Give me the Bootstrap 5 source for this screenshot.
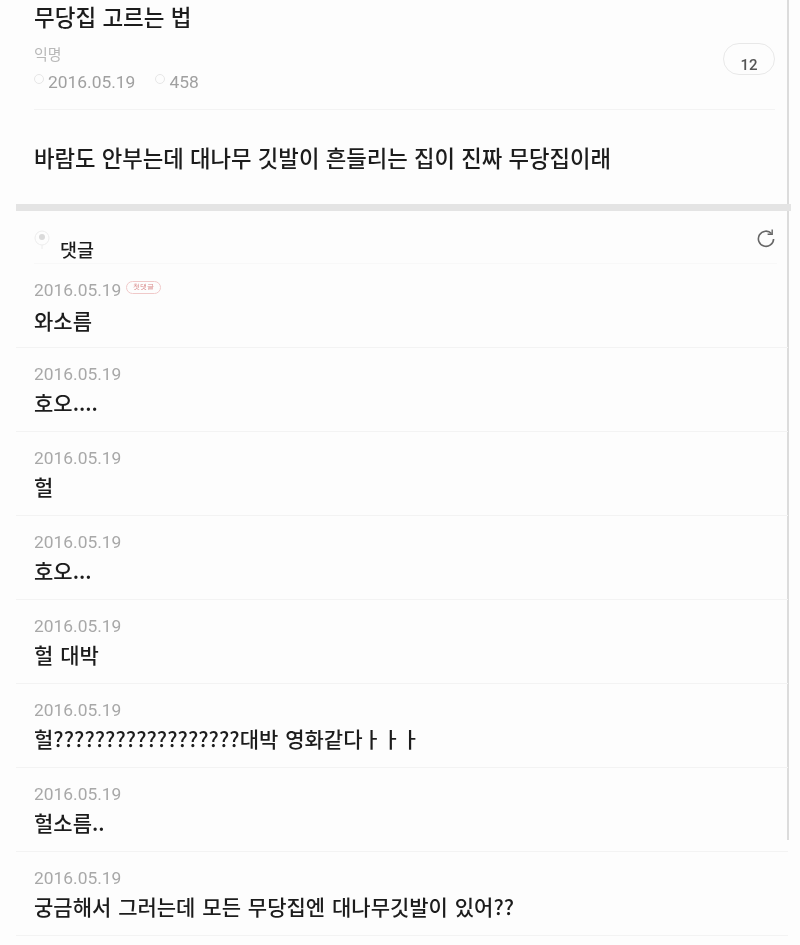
<!DOCTYPE html>
<html lang="ko">
<head>
  <meta charset="UTF-8">
  <meta name="viewport" content="width=device-width, initial-scale=1.0">
  <title>무당집 고르는 법</title>
  <link href="https://cdn.jsdelivr.net/npm/bootstrap@5.3.0/dist/css/bootstrap.min.css" rel="stylesheet">
  <style>
    html, body { height: 945px; overflow: hidden; }
    body { background: #fdfdfd; color: #1c1c1c; font-family: "Noto Sans CJK KR", "Liberation Sans", sans-serif; }
    .sheet { width: 789px; height: 840px; border-right: 2px solid #dcdcdc; filter: blur(0.4px); }
    .post-head { height: 110px; margin: 0 12px 0 34px; border-bottom: 1px solid #f3f3f3; }
    .post-title { font-size: 22.5px; font-weight: 500; line-height: 32px; margin: 0; }
    .post-author { font-size: 15px; line-height: 20px; color: #b8b8b8; margin-top: 12px; }
    .post-meta { font-size: 17.4px; line-height: 20px; color: #a0a0a0; font-family: Roboto, sans-serif; margin-top: 8px; }
    .dot { width: 10px; height: 10px; border: 1px solid #e6e6e6; border-radius: 50%; margin-top: -6px; }
    .meta-gap { margin-left: 20px; }
    .count-pill { width: 52px; height: 32px; margin-top: 43px; border: 1px solid #e8e8e8; border-radius: 16px; font: 500 15px/42px Roboto, sans-serif; color: #555; text-align: center; overflow: hidden; }
    .post-body { height: 94px; padding-left: 34px; font-size: 22.3px; font-weight: 500; line-height: 94px; margin: 0; white-space: nowrap; }
    .band { height: 7px; margin-left: 16px; width: 775px; background: #e4e4e4; }
    .reply-head { height: 53px; margin: 0 10px 0 34px; border-bottom: 1px solid #f8f8f8; }
    .reply-label { font-size: 18.5px; font-weight: 500; line-height: 24px; margin-top: 26px; }
    .reply-pin { width: 16px; height: 20px; margin: 19px 10px 0 0; }
    .refresh { margin-top: 16px; }
    .reply-list { position: relative; width: 800px; }
    .reply-row { height: 84px; margin-left: 16px; width: 772px; padding: 16px 0 0 18px; border-bottom: 1px solid #f3f3f3; }
    .reply-date { font-size: 17.4px; line-height: 20px; color: #a8a8a8; font-family: Roboto, sans-serif; }
    .reply-text { font-size: 21px; font-weight: 500; line-height: 26px; margin-top: 5px; white-space: nowrap; word-spacing: 1px; }
    .best-tag { display: inline-block; width: 35px; height: 13px; margin: 0 0 8px 5px; border: 1px solid #f0c9c9; border-radius: 7px; font-size: 7px; line-height: 11px; color: #d98a8a; text-align: center; vertical-align: middle; }
  </style>
</head>
<body>
  <div class="sheet">
    <div class="post-head d-flex justify-content-between">
      <div>
        <h1 class="post-title">무당집 고르는 법</h1>
        <div class="post-author">익명</div>
        <div class="post-meta d-flex align-items-center">
          <span class="dot me-1"></span><span>2016.05.19</span>
          <span class="dot meta-gap me-1"></span><span>458</span>
        </div>
      </div>
      <div class="count-pill">12</div>
    </div>
    <p class="post-body">바람도 안부는데 대나무 깃발이 흔들리는 집이 진짜 무당집이래</p>
    <div class="band"></div>
    <div class="reply-head d-flex justify-content-between">
      <div class="d-flex">
        <svg class="reply-pin" viewBox="0 0 16 20"><circle cx="8" cy="8" r="7" fill="none" stroke="#ececec"/><circle cx="8" cy="7" r="3" fill="#dadada"/><path d="M8 15v4" stroke="#ececec"/></svg>
        <div class="reply-label">댓글</div>
      </div>
      <svg class="refresh" width="22" height="22" viewBox="0 0 22 22" fill="none" stroke="#666" stroke-width="1.6"><path d="M16.5 6.5A7.6 7.6 0 1 0 18.6 12"/><path d="M17.2 2.6v4.6h-4.6" stroke-width="1.4"/></svg>
    </div>
    <div class="reply-list" id="replies"></div>
  </div>
  <script>
    const replies = [
      '와소름', '호오....', '헐', '호오...', '헐 대박',
      '헐??????????????????대박 영화같다ㅏㅏㅏ', '헐소름..', '궁금해서 그러는데 모든 무당집엔 대나무깃발이 있어??'
    ];
    document.getElementById('replies').innerHTML = replies.map((text, i) => `
      <div class="reply-row">
        <div class="reply-date">2016.05.19${i === 0 ? '<span class="best-tag">첫댓글</span>' : ''}</div>
        <div class="reply-text">${text}</div>
      </div>`).join('');
  </script>
  <script src="https://cdn.jsdelivr.net/npm/bootstrap@5.3.0/dist/js/bootstrap.bundle.min.js"></script>
</body>
</html>
